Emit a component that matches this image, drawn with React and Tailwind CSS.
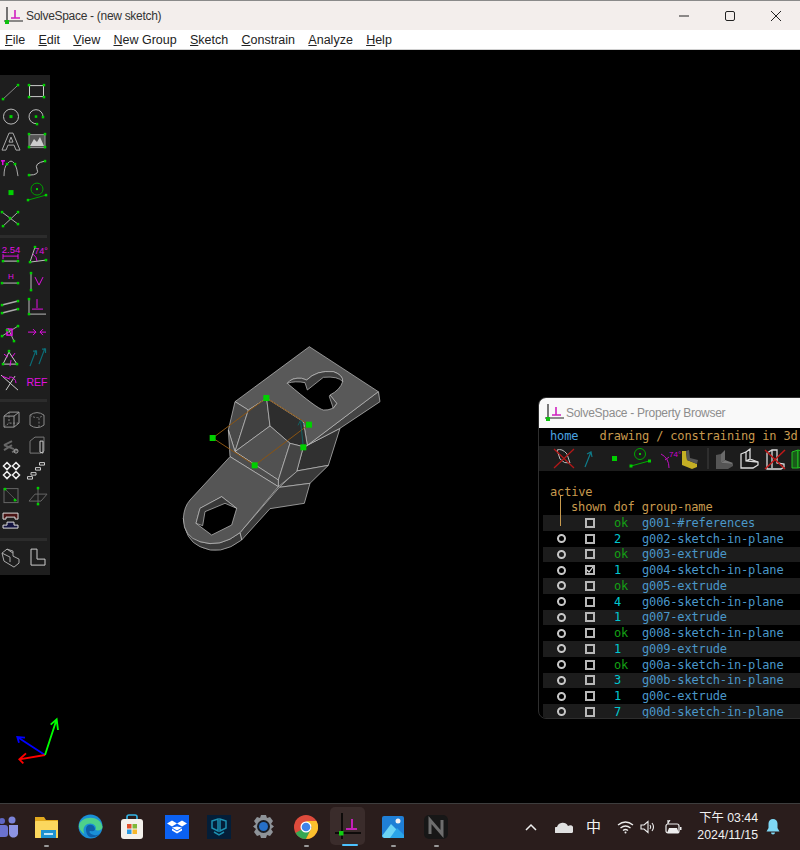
import React from "react";

const green = "#00d000";
const gray = "#b0b0b0";
const mag = "#e010e0";

// little green point handle used by most of the toolbar icons
const P = ({ x, y, s = 2.5 }) => <rect x={x - s / 2} y={y - s / 2} width={s} height={s} fill={green} />;
const L = ({ d, c = gray, w = 1 }) => <path d={d} fill="none" stroke={c} strokeWidth={w} />;

const TOOLS = [
  // row group 1
  <><L d="M5 20L20 6" c="#888" /><P x={5} y={20} /><P x={20} y={6} /></>,
  <><rect x="5.5" y="6.5" width="14" height="11" fill="none" stroke="#ccc" /><P x={5} y={6} /><P x={20} y={6} /><P x={5} y={18} /><P x={20} y={18} /></>,
  <><circle cx="13" cy="12.5" r="7.5" fill="none" stroke="#bbb" /><P x={13} y={12.5} s={3} /></>,
  <><path d="M19 13A7 7 0 1 0 13 19.5" fill="none" stroke="#bbb" /><P x={12} y={12.5} /><P x={19} y={13} /><P x={13} y={20} /></>,
  <><path d="M4 21L11 4h4l7 17h-4l-2-5h-6l-2 5zM11 13h4l-2-5z" fill="none" stroke="#aaa" /></>,
  <><rect x="5" y="5.5" width="16" height="13" fill="#555" stroke="#999" /><path d="M6 17l4-7 3 3 3-5 4 9z" fill="#ccc" /><P x={5} y={5} /><P x={21} y={5} /><P x={5} y={18} /><P x={21} y={18} /></>,
  <><path d="M6 21Q6 12 9 9M10 8Q13 4 16 8M17 9Q19 13 20 21" fill="none" stroke="#aaa" /><rect x="3" y="5" width="4" height="1.5" fill={mag} /><rect x="4" y="5" width="1.5" height="5" fill={mag} /><P x={9} y={9} /><P x={17} y={9} /></>,
  <><path d="M5 20Q16 20 13 14T21 6" fill="none" stroke="#bbb" /><P x={5} y={20} /><P x={21} y={6} /></>,
  <P x={13} y={12.5} s={5} />,
  <><circle cx="13" cy="9" r="6" fill="none" stroke="#00a000" /><P x={13} y={9} s={2} /><L d="M4 20L22 15" c="#00a000" /><P x={4} y={20} /><P x={22} y={15} /></>,
  <><L d="M4 7L20 19M5 21L20 7" c="#aaa" /><P x={4} y={7} /><P x={20} y={19} /><P x={5} y={21} /><P x={20} y={7} /><P x={12} y={13} /></>,
  null,
];

const CONSTRAINTS = [
  <><text x="13" y="9.5" textAnchor="middle" fill={mag} className="font-['Liberation_Sans',sans-serif] text-[9.5px]">2.54</text><L d="M5 11v5M20 11v5M5 13h15" c={mag} /><L d="M5 18h15" c="#ccc" /><P x={5} y={18} /><P x={20} y={18} /></>,
  <><text x="17" y="11" textAnchor="middle" fill={mag} className="font-['Liberation_Sans',sans-serif] text-[9px]">74°</text><L d="M6 19L11 4M6 19L22 17" c="#bbb" /><path d="M9 11Q13 14 13 18" fill="none" stroke={mag} /><P x={11} y={4} /><P x={6} y={19} /><P x={22} y={17} /></>,
  <><text x="13" y="11" textAnchor="middle" fill={mag} className="font-['Liberation_Sans',sans-serif] text-[8px]">H</text><L d="M4 15h16" c="#888" w={1.5} /><P x={4} y={15} /><P x={20} y={15} /></>,
  <><L d="M7 5v17" c="#bbb" /><P x={7} y={5} /><P x={7} y={22} /><L d="M11 9l4 8 4-8" c={mag} /></>,
  <><L d="M4 11L20 7M4 19L20 15" c="#aaa" w={1.5} /><P x={4} y={11} /><P x={20} y={7} /><P x={4} y={19} /><P x={20} y={15} /></>,
  <><L d="M5 5v15h17" c="#bbb" /><L d="M13 5v9M8 15h11" c={mag} /><P x={5} y={5} /><P x={5} y={20} /></>,
  <><L d="M4 17L20 7M10 9L16 22" c="#aaa" /><rect x="9" y="10" width="5" height="6" fill="none" stroke={mag} strokeWidth="1.5" /><P x={4} y={17} /><P x={20} y={7} /><P x={16} y={22} /><P x={9} y={11} /></>,
  <><L d="M4 13h8M9 10l3 3-3 3M22 13h-6M19 10l-3 3 3 3" c={mag} /></>,
  <><path d="M11 8L19 20H5z" fill="none" stroke="#ccc" /><L d="M6 10l4 3M17 9l-3 4M12 22l1-6" c={mag} /><P x={11} y={7} /><P x={5} y={20} /><P x={19} y={20} /></>,
  <><L d="M6 22L12 6M9 7h3.5v4M15 20L21 4M18 5h3.5v4" c="#0b6e78" w={1.2} /></>,
  <><L d="M3 6L20 21M8 21L17 7" c="#ccc" /><path d="M11 8A6 6 0 0 1 18 14" fill="none" stroke={mag} /><L d="M4 7l8 3" c={mag} /></>,
  <text x="13" y="17" textAnchor="middle" fill={mag} className="font-['Liberation_Sans',sans-serif] text-[10.5px]">REF</text>,
];

const VIEWS = [
  <><path d="M6 9l5-4h10v11l-5 4H6zM6 9h10v11M16 9l5-4" fill="none" stroke="#999" /><path d="M6 20l5-4h10M11 5v11" fill="none" stroke="#888" strokeDasharray="2 1.5" /></>,
  <><path d="M6 8q7-5 14 0v10q-7 5-14 0z" fill="none" stroke="#888" /><path d="M6 8q7 5 14 0M15 11v9" fill="none" stroke="#777" strokeDasharray="2 1.5" /></>,
  <><path d="M6 13l8-4M6 13l10 4M6 18l8-5M14 20l5-2" fill="none" stroke="#666" strokeWidth="2" /><circle cx="18" cy="19" r="2" fill="none" stroke="#aaa" /></>,
  <><path d="M6 9l5-4h9v14l-3 2H6z" fill="none" stroke="#777" /><path d="M16 9v11l3 1V9z" fill="none" stroke="#ccc" /></>,
  <><path d="M9 4.500l3.500 3.500-3.500 3.500-3.500-3.500zM18 4.500l3.500 3.500-3.500 3.500-3.500-3.500zM9 13.500l3.500 3.500-3.500 3.500-3.500-3.500zM18 13.500l3.500 3.500-3.500 3.500-3.500-3.500z" fill="none" stroke="#eee" strokeWidth="1.500" /></>,
  <><path d="M3.500 18.500h5v2.500h-5zM7 14.500h5v2.500H7zM11.500 9.500h5V12h-5zM15.500 4.500h5V7h-5z" fill="none" stroke="#ccc" /></>,
  <><rect x="6" y="5.5" width="14" height="14" fill="none" stroke="#666" /><L d="M7 6L19 18" c="#555" /><P x={7} y={6} /><P x={17} y={17} /></>,
  <><path d="M5 18l6-7h12l-6 7z" fill="none" stroke="#666" /><L d="M14 5v17" c="#666" /><P x={14} y={5} /><P x={14} y={21} /></>,
  <><path d="M5 5h15v6h-3V9H8v2H5z" fill="#4a1414" stroke="#ddd" /><path d="M5 20h15v-3h-4v-3H9v3H5z" fill="#141440" stroke="#ddd" /></>,
  null,
];

const BOTTOM = [
  <><path d="M4 9l5-4 6 2v5l6 3v4l-5 4-10-6zM4 9l8 4v5M9 5l6 4" fill="none" stroke="#aaa" /></>,
  <><path d="M7 5h6v10h8v6H7z" fill="none" stroke="#ccc" /></>,
];

const Cell = ({ children }) => (
  <svg width="26" height="25.2" viewBox="0 0 26 25">{children}</svg>
);

const ToolGroup = ({ items }) => (
  <div className="grid grid-cols-[26px_26px] ml-[-2px]">
    {items.map((t, i) => (
      <Cell key={i}>{t}</Cell>
    ))}
  </div>
);

const Sep = () => <div className="h-[3px] w-[47px] bg-[#2c2c2c] my-[5px]" />;

const GROUPS = [
  ["g001-#references", "ok", true],
  ["g002-sketch-in-plane", "2"],
  ["g003-extrude", "ok"],
  ["g004-sketch-in-plane", "1"],
  ["g005-extrude", "ok"],
  ["g006-sketch-in-plane", "4"],
  ["g007-extrude", "1"],
  ["g008-sketch-in-plane", "ok"],
  ["g009-extrude", "1"],
  ["g00a-sketch-in-plane", "ok"],
  ["g00b-sketch-in-plane", "3"],
  ["g00c-extrude", "1"],
  ["g00d-sketch-in-plane", "7"],
];

const AppLogo = ({ size = 20 }) => (
  <svg width={size} height={size} viewBox="0 0 20 20">
    <path d="M3 1v16M0 15h19" stroke="#222" strokeWidth="1.2" fill="none" />
    <path d="M11 4v8M7 12h9" stroke="#d020c0" strokeWidth="1.6" fill="none" />
    <rect x="1" y="14" width="4" height="4" fill="#10c010" />
  </svg>
);

// the 3d part in the middle of the canvas, coords are 3x
const Model = () => (
  <svg className="absolute left-[170px] top-[290px]" width="220" height="220" viewBox="0 0 660 660">
    <g stroke="#c8c8c8" strokeWidth="2" strokeLinejoin="round">
      {/* undersides */}
      <path d="M40 535Q45 600 90 620Q150 650 215 600L300 505L403 490L420 430L475 378L510 265L630 185L628 155L400 320L380 395L325 440L210 580Z" fill="#333" stroke="none" />
      <path d="M400 322L510 265L475 376L380 393Z" fill="#303030" />
      <path d="M380 393L475 376L420 430L328 442Z" fill="#3a3a3a" />
      <path d="M328 442L420 430L403 490L300 506L215 600L210 578Z" fill="#3c3c3c" />
      <path d="M40 535Q45 600 90 620Q150 650 215 600L210 578Q150 625 90 605Q50 585 40 535Z" fill="#3a3a3a" />
      <path d="M412 316L625 155L630 185L510 265L400 322Z" fill="#444" />
      {/* top plate */}
      <path d="M195 185L418 20L625 155L412 316L400 245L290 175L235 210Z" fill="#595959" />
      {/* pocket */}
      <path d="M195 185L235 210L195 335L175 270Z" fill="#4a4a4a" />
      <path d="M235 210L290 175L300 258L195 335Z" fill="#414141" />
      <path d="M290 175L400 245L412 316L400 320L360 310L300 258Z" fill="#2d2d2d" />
      <path d="M300 258L360 310L325 420L195 335Z" fill="#515151" />
      <path d="M360 310L400 320L380 395L325 440L325 420Z" fill="#444" />
      <path d="M175 270L195 335L325 420L325 440L180 350Z" fill="#4d4d4d" />
      {/* arm with round end */}
      <path d="M180 350L325 440L210 578Q150 625 90 605Q40 590 40 535Q42 500 60 480Z" fill="#555" />
      {/* hex hole */}
      <path d="M90 505L155 470L200 505L185 555L125 585L78 550Z" fill="#000" />
      <path d="M90 505L155 470L200 505L165 490L105 515L98 557L78 550Z" fill="#383838" />
      {/* keyhole */}
      <path d="M352 130Q365 112 395 115L410 120Q440 90 490 95Q520 105 518 125Q510 150 480 165L500 190Q490 212 460 210Q440 205 352 130Z" fill="#000" />
      <path d="M352 130Q365 112 395 115L410 120Q440 90 490 95Q520 105 518 125Q505 108 460 112L412 150L405 128Q375 122 352 130Z" fill="#3e3e3e" />
      <path d="M480 165L500 190L490 205L478 170Z" fill="#3e3e3e" />
    </g>
    {/* active sketch workplane */}
    <path d="M128 294L289 174L416 254L254 376Z" fill="none" stroke="#8a5412" strokeWidth="3" />
    <path d="M400 322L392 245M384 256L392 240L402 254" fill="none" stroke="#0f6e6e" strokeWidth="2.5" />
    <g fill="#00d000">
      <rect x="119" y="285" width="18" height="18" />
      <rect x="280" y="165" width="18" height="18" />
      <rect x="408" y="245" width="18" height="18" />
      <rect x="245" y="367" width="18" height="18" />
      <rect x="391" y="313" width="18" height="18" />
    </g>
  </svg>
);

const Axes = () => (
  <svg className="absolute left-0 top-[650px]" width="80" height="80" viewBox="0 0 240 240" fill="none" strokeWidth="5.5">
    <path d="M135 165L52 111M57 128L52 111L75 113" stroke="#0000ff" />
    <path d="M135 165L58 178M78 160L58 178L70 190" stroke="#ff0000" />
    <path d="M135 165L170 58M152 74L170 58L174 90" stroke="#00ff00" />
  </svg>
);

const Dot = () => <div className="w-[5px] h-[2px] rounded-full bg-[#9a9a9a]" />;

const TaskIcon = ({ x, children, dot }) => (
  <div className={`absolute top-[5px] flex flex-col items-center w-[32px] ${x}`}>
    <div className="h-[35.5px] flex items-center justify-center">{children}</div>
    {dot && <Dot />}
  </div>
);

const Taskbar = () => (
  <div className="relative h-[47px] bg-[#2a1d1c] border-t border-[#3d3d3d] overflow-hidden">
    <TaskIcon x="left-[-8px]">
      <svg width="26" height="26" viewBox="0 0 26 26">
        <circle cx="17" cy="6" r="3.5" fill="#7b83d8" /><circle cx="7" cy="7" r="3" fill="#5f67c4" />
        <rect x="2" y="11" width="11" height="12" rx="3" fill="#6b72cf" /><path d="M14 11h9v7a4 4 0 0 1-9 2z" fill="#8d94e3" />
      </svg>
    </TaskIcon>
    <TaskIcon x="left-[30px]" dot>
      <svg width="25" height="26" viewBox="0 0 25 26">
        <path d="M1 3h9l2 3h12v18H1z" fill="#e2a91e" /><rect x="1" y="7" width="23" height="17" rx="1" fill="#fbd75e" />
        <rect x="7" y="16" width="15" height="8" fill="#1e92d2" /><rect x="10" y="19" width="9" height="2" fill="#bfe6fa" />
      </svg>
    </TaskIcon>
    <TaskIcon x="left-[74px]">
      <svg width="25" height="25" viewBox="0 0 25 25">
        <circle cx="12.5" cy="12.5" r="12" fill="#1a8fd6" />
        <path d="M1 11C3 2 22 0 24.5 13c0 3-4 4-7 3 2-4-3-8-8-6-4 2-5 6-3 10-3-2-6-5-5.500-9z" fill="#4ed08a" />
        <path d="M8 15c0-5 8-6 9 0 0 3-4 2-5 2s-1 3 4 4 6-2 6-2c-2 4-7 5-10 4-3-1-4-5-4-8z" fill="#0d5ea8" />
      </svg>
    </TaskIcon>
    <TaskIcon x="left-[116px]">
      <svg width="24" height="26" viewBox="0 0 24 26">
        <path d="M7 6V3a2 2 0 0 1 2-2h6a2 2 0 0 1 2 2v3" fill="none" stroke="#35b6e8" strokeWidth="1.6" />
        <rect x="1" y="5" width="22" height="20" rx="3" fill="#f4f1ec" />
        <rect x="7" y="10" width="4.500" height="4.500" fill="#e2502a" /><rect x="12.500" y="10" width="4.500" height="4.500" fill="#7eb83a" />
        <rect x="7" y="15.500" width="4.500" height="4.500" fill="#2a9ae2" /><rect x="12.500" y="15.500" width="4.500" height="4.500" fill="#f6b72a" />
      </svg>
    </TaskIcon>
    <TaskIcon x="left-[161px]">
      <svg width="24" height="24" viewBox="0 0 24 24">
        <rect width="24" height="24" fill="#0b61f2" />
        <path d="M7 6l5 3-5 3-5-3zM17 6l5 3-5 3-5-3zM7 13l5-1 5 1-5 3zM7 14l5 3 5-3v2l-5 3-5-3z" fill="#fff" transform="translate(0 -.5)" />
      </svg>
    </TaskIcon>
    <TaskIcon x="left-[203px]">
      <svg width="24" height="24" viewBox="0 0 24 24">
        <rect width="24" height="24" fill="#041e38" />
        <path d="M5 6l6-2v12l-6-3zM19 6l-6-2v12l6-3zM7 17l5 3 5-3" fill="none" stroke="#1c8fb0" strokeWidth="1.5" />
      </svg>
    </TaskIcon>
    <TaskIcon x="left-[247px]">
      <svg width="25" height="25" viewBox="0 0 25 25">
        <path d="M10 1h5l1 3 3-1 3 4-2 3 3 2.500-3 2.500 2 3-3 4-3-1-1 3h-5l-1-3-3 1-3-4 2-3-3-2.500 3-2.500-2-3 3-4 3 1z" fill="#8e9398" />
        <circle cx="12.500" cy="12.500" r="6.500" fill="#1a1f27" /><circle cx="12.500" cy="12.500" r="4.500" fill="#2670c8" />
      </svg>
    </TaskIcon>
    <TaskIcon x="left-[290px]" dot>
      <svg width="24" height="24" viewBox="0 0 24 24">
        <circle cx="12" cy="12" r="12" fill="#dd4b3c" />
        <path d="M12 12L1.600 18A12 12 0 0 0 12 24l6-12z" fill="#35a853" />
        <path d="M12 24A12 12 0 0 0 22.400 6H12l6 6z" fill="#fbc02d" />
        <circle cx="12" cy="12" r="5.500" fill="#fff" /><circle cx="12" cy="12" r="4.300" fill="#3f83ea" />
      </svg>
    </TaskIcon>
    <div className="absolute left-[330px] top-[3px] w-[35px] h-[38px] rounded-[5px] bg-[#3a2c2b] flex items-center justify-center">
      <svg width="26" height="28" viewBox="0 0 26 28">
        <path d="M7 1v26M0 21h26" stroke="#000" strokeWidth="1.500" fill="none" />
        <path d="M17 7v10M11 17h11" stroke="#c420b8" strokeWidth="2" fill="none" />
        <rect x="4" y="19" width="4.500" height="4.500" fill="#10d010" />
      </svg>
    </div>
    <div className="absolute left-[342px] top-[39.5px] w-[16px] h-[2.5px] rounded-full bg-[#4cc2ff]" />
    <TaskIcon x="left-[377px]" dot>
      <svg width="22" height="22" viewBox="0 0 22 22">
        <rect width="22" height="22" rx="2" fill="#1f7fd6" />
        <path d="M0 20L9 8l6 6-5 8H2z" fill="#6cd4f5" /><circle cx="16" cy="5" r="2.500" fill="#f6f0f0" />
        <path d="M8 22l7-10 7 7v3z" fill="#2aa4e8" />
      </svg>
    </TaskIcon>
    <TaskIcon x="left-[420px]" dot>
      <svg width="24" height="24" viewBox="0 0 24 24">
        <rect width="24" height="24" rx="5" fill="#171717" />
        <path d="M6 19V5l12 14V5" fill="none" stroke="#6e6e6e" strokeWidth="3" />
      </svg>
    </TaskIcon>
    {/* tray */}
    <div className="absolute right-0 top-0 h-[46px] flex items-center text-[#f2f2f2] font-['Liberation_Sans',sans-serif]">
      <svg className="absolute left-[-275px]" width="12" height="8" viewBox="0 0 12 8"><path d="M1 7l5-5 5 5" fill="none" stroke="#eee" strokeWidth="1.500" /></svg>
      <svg className="absolute left-[-245px]" width="18" height="12" viewBox="0 0 18 12"><path d="M1 12a3 3 0 0 1 1-6 6 6 0 0 1 11-1 4 4 0 0 1 4 7z" fill="#e0e0e0" /></svg>
      <span className="absolute left-[-214px] top-[12px] text-[15px] leading-[20px] font-['Noto_Sans_CJK_TC',sans-serif]">中</span>
      <svg className="absolute left-[-183px]" width="17" height="14" viewBox="0 0 17 14" fill="none" stroke="#eee" strokeWidth="1.300"><path d="M1 5q7.500-6 15 0M3.500 8q5-4 10 0M6 10.500q2.500-2 5 0" /><circle cx="8.500" cy="12.500" r="1" fill="#eee" stroke="none" /></svg>
      <svg className="absolute left-[-160px]" width="16" height="14" viewBox="0 0 16 14" fill="none" stroke="#eee" strokeWidth="1.100"><path d="M1 5h3l4-3.500v11L4 9H1z" /><path d="M10 5q1.500 2 0 4M12 3q3 4 0 8" /></svg>
      <svg className="absolute left-[-135px]" width="17" height="15" viewBox="0 0 17 15" fill="none" stroke="#eee" strokeWidth="1.200"><rect x="1" y="4" width="13" height="9" rx="2" /><rect x="15" y="7" width="1.500" height="3" fill="#eee" stroke="none" /><path d="M2 13l2-5h8l2 5z" fill="#eee" stroke="none" /><path d="M3 0v4M5 0l-2 3" /></svg>
      <div className="absolute right-[42px] top-[6px] text-right text-[12.3px] leading-[17px] whitespace-nowrap">
        <div className="font-['Liberation_Sans','Noto_Sans_CJK_TC',sans-serif]">下午 03:44</div>
        <div>2024/11/15</div>
      </div>
      <svg className="absolute left-[-34px]" width="14" height="16" viewBox="0 0 14 16"><path d="M7 0a4.500 4.500 0 0 1 4.500 4.500V9l2 3.500H.500L2.500 9V4.500A4.500 4.500 0 0 1 7 0zM5 13.500h4a2 2 0 0 1-4 0z" fill="#7fd8f5" /></svg>
    </div>
  </div>
);

const PropertyBrowser = () => (
  <div className="absolute left-[538px] top-[347px] w-[270px] h-[322px] bg-black rounded-l-[8px] border border-[#2e2e2e] overflow-hidden font-['DejaVu_Sans_Mono',monospace] text-[12px]">
    <div className="h-[30px] bg-[#f9f9f9] flex items-center pl-[6px] gap-[1px] font-['Liberation_Sans',sans-serif] text-[12px] tracking-[-0.28px] text-[#8d8d8d]">
      <AppLogo />
      <span>SolveSpace - Property Browser</span>
    </div>
    <div className="h-[17px] pl-[11px] flex items-center leading-[17px] whitespace-pre tracking-[-0.150px] text-[#c89a4e]">
      <span className="text-[#4aa3e0]">home</span>
      <span>   drawing / constraining in 3d</span>
    </div>
    <div className="h-[25px] bg-[#1c1c1c] flex items-center pl-[14px] mt-[1px]">
      <svg width="262" height="25" viewBox="0 0 262 25" className="shrink-0">
        <path d="M4 4q5-2 10 4l3 9q-6 1-10-4z" fill="none" stroke="#bbb" /><path d="M1 3l20 19M21 3L1 22" stroke="#b01818" strokeWidth="1.300" />
        <path d="M32 21L38 6M34 8l4-2 1 5" fill="none" stroke="#0f7a88" strokeWidth="1.200" />
        <rect x="59" y="10" width="5" height="5" fill="#00d000" />
        <circle cx="87" cy="8" r="5.500" fill="none" stroke="#00a800" /><rect x="86" y="7" width="2" height="2" fill="#00d000" /><path d="M78 20L96 15" stroke="#00b000" /><rect x="76.500" y="18.500" width="3" height="3" fill="#00d000" /><rect x="95" y="13.500" width="3" height="3" fill="#00d000" />
        <path d="M108 8q8 4 8 14M116 11l-4 3" fill="none" stroke="#c010c0" /><text x="116" y="11" fill="#d000d0" className="font-['Liberation_Sans',sans-serif] text-[8px]">74°</text>
        <path d="M129 5h4l1 9 10 4v3l-5 2-10-4z" fill="#c4ae24" /><path d="M133 5l3-1 1 8 8 2-1 4-10-4z" fill="#555" />
        <rect x="154" y="2" width="2" height="21" fill="#2e2e2e" />
        <path d="M163 9l5-1v9l12 1v2l-5 3h-12z" fill="#555" /><path d="M168 8l4-4v10l-4 3z" fill="#6a6a6a" /><path d="M168 17l4-3 8 3-1 1z" fill="#777" />
        <path d="M188 8l5-2v9l12 1v3l-5 3h-12zM193 6l4-3v10l-4 2M193 15l4-2 8 3" fill="none" stroke="#ddd" strokeWidth="1.300" />
        <path d="M214 7l5-3h5v13l7 1v3l-3 2h-14zM219 4v18" fill="none" stroke="#ddd" strokeWidth="1.300" /><path d="M212 4l20 19M232 4l-20 19" stroke="#c01818" strokeWidth="1.500" />
        <path d="M239 6l6-2v18h-6z" fill="#1a5a1a" stroke="#20c020" /><path d="M245 4l8 2v14l-8 2z" fill="#144a14" stroke="#20c020" />
      </svg>
    </div>
    <div className="pl-[11px] mt-[12.5px] h-[15.5px] leading-[16px] text-[#c89a4e] tracking-[-0.150px]">active</div>
    <div className="pl-[32px] h-[16px] leading-[16px] text-[#c89a4e] whitespace-pre tracking-[-0.150px]">shown dof group-name</div>
    <div className="relative">
      <div className="absolute left-[21px] top-[-20px] w-px h-[31px] bg-[#c89a4e]" />
      {GROUPS.map((g, i) => (
        <div key={g[0]} className={`ml-[4px] h-[15.750px] flex items-center tracking-[-0.150px] ${i % 2 === 0 ? "bg-[#1c1c1c]" : "bg-black"}`}>
          <div className="w-[45px] pl-[13.5px] shrink-0 flex items-center">
            {!g[2] && <div className="w-[9px] h-[9px] rounded-full border-2 border-[#c8c8c8]" />}
          </div>
          <div className={`w-[10px] h-[10px] shrink-0 border-2 border-[#b8b8b8] ml-[-3px] flex items-center justify-center`}>
            {g[0].startsWith("g004") && (
              <svg width="8" height="8" viewBox="0 0 8 8" className="shrink-0"><path d="M1 4l2 2 4-5" fill="none" stroke="#ddd" strokeWidth="1.200" /></svg>
            )}
          </div>
          <div className={`w-[28px] ml-[19px] shrink-0 ${g[1] === "ok" ? "text-[#14a014]" : "text-[#00c8d0]"}`}>{g[1]}</div>
          <div className="text-[#4a97c9] whitespace-nowrap">{g[0]}</div>
        </div>
      ))}
    </div>
  </div>
);

const MENU = [
  ["F", "ile"],
  ["E", "dit"],
  ["V", "iew"],
  ["N", "ew Group"],
  ["S", "ketch"],
  ["C", "onstrain"],
  ["A", "nalyze"],
  ["H", "elp"],
];

export default function App() {
  return (
    <div className="w-[800px] h-[850px] flex flex-col overflow-hidden bg-black font-['Liberation_Sans',sans-serif]">
      <div className="h-[30px] bg-[#f3eeec] border-t border-[#8a8a8a] flex items-center pl-[4px] gap-[2px] shrink-0">
        <AppLogo />
        <span className="text-[12px] tracking-[-0.3px] text-[#333]">SolveSpace - (new sketch)</span>
        <div className="ml-auto flex items-center gap-[34px] pr-[18px]">
          <svg width="12" height="12" viewBox="0 0 12 12"><path d="M1 6h10" stroke="#222" /></svg>
          <svg width="12" height="12" viewBox="0 0 12 12"><rect x="1.500" y="1.500" width="9" height="9" rx="1.500" fill="none" stroke="#222" /></svg>
          <svg width="12" height="12" viewBox="0 0 12 12"><path d="M1 1l10 10M11 1L1 11" stroke="#222" /></svg>
        </div>
      </div>
      <div className="h-[20px] bg-white border-b border-[#d0d0d0] flex items-center pl-[5px] pt-[1px] gap-[13.3px] text-[12.5px] text-[#222] shrink-0">
        {MENU.map((m) => (
          <span key={m[1]}><span className="underline">{m[0]}</span>{m[1]}</span>
        ))}
      </div>
      <div className="relative flex-1 bg-black overflow-hidden">
        <div className="absolute left-0 top-[25px] w-[50px] h-[500px] bg-[#1e1e1e] pt-[4px]">
          <ToolGroup items={TOOLS} />
          <Sep />
          <ToolGroup items={CONSTRAINTS} />
          <Sep />
          <ToolGroup items={VIEWS} />
          <Sep />
          <div className="mt-[-2px]">
            <ToolGroup items={BOTTOM} />
          </div>
        </div>
        <Model />
        <Axes />
        <PropertyBrowser />
      </div>
      <Taskbar />
    </div>
  );
}
